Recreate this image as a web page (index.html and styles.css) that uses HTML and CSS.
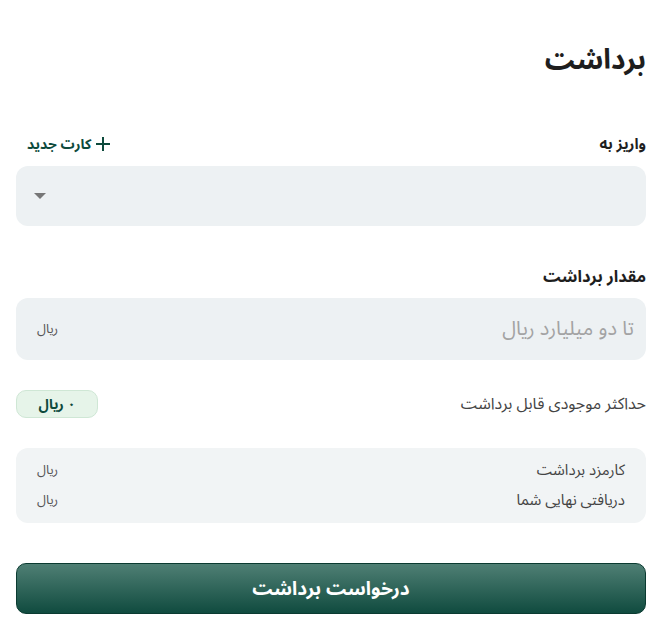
FILE: index.html
```html
<!DOCTYPE html>
<html lang="fa" dir="rtl">
<head>
<meta charset="UTF-8">
<meta name="viewport" content="width=device-width, initial-scale=1.0">
<title>برداشت</title>
<link rel="stylesheet" href="styles.css">
</head>
<body>

<div class="withdraw">
    <h1 class="title">برداشت</h1>

    <div class="field-head">
        <span class="label">واریز به</span>
        <a class="new-card" href="#">
            <svg width="16" height="16" viewBox="0 0 16 16"><path d="M8 1v14M1 8h14" stroke="#0d4a3c" stroke-width="2" fill="none"/></svg>
            کارت جدید
        </a>
    </div>
    <div class="select-box">
        <span class="caret"></span>
    </div>

    <div class="field-head amount-head">
        <span class="label">مقدار برداشت</span>
    </div>
    <div class="input-box">
        <span class="placeholder">تا دو میلیارد ریال</span>
        <span class="unit">ریال</span>
    </div>

    <div class="balance-row">
        <span class="balance-text">حداکثر موجودی قابل برداشت</span>
        <span class="badge">۰ ریال</span>
    </div>

    <div class="summary">
        <div class="summary-row">
            <span>کارمزد برداشت</span>
            <span class="unit">ریال</span>
        </div>
        <div class="summary-row">
            <span>دریافتی نهایی شما</span>
            <span class="unit">ریال</span>
        </div>
    </div>

    <button class="submit">درخواست برداشت</button>
</div>

</body>
</html>
```

FILE: styles.css
```css
body {
    margin: 0;
    font-family: "Noto Sans Arabic", "DejaVu Sans", sans-serif;
    background-color: #fff;
    color: #222;
}

.withdraw {
    padding: 0 13px 0 16px;
    display: flex;
    flex-direction: column;
}

.title {
    margin: 40px 0 0 0;
    font-size: 28px;
    font-weight: bold;
    color: #1e1e1e;
    line-height: 42px;
}

.field-head {
    display: flex;
    justify-content: space-between;
    align-items: center;
    margin-top: 50px;
    height: 24px;
}

.amount-head {
    margin-top: 38px;
}

.label {
    font-size: 15px;
    font-weight: bold;
    color: #1e1e1e;
}

.amount-head .label {
    font-size: 16.5px;
}

.new-card {
    display: flex;
    align-items: center;
    gap: 4px;
    font-size: 14px;
    font-weight: bold;
    color: #0d4a3c;
    text-decoration: none;
    margin-left: 11px;
}

.select-box {
    margin-top: 10px;
    height: 60px;
    background-color: #edf1f3;
    border-radius: 12px;
    display: flex;
    align-items: center;
    justify-content: flex-end;
    padding-left: 18px;
}

.caret {
    width: 0;
    height: 0;
    border-left: 6px solid transparent;
    border-right: 6px solid transparent;
    border-top: 6px solid #777;
}

.input-box {
    margin-top: 10px;
    height: 62px;
    background-color: #edf1f3;
    border-radius: 12px;
    display: flex;
    align-items: center;
    justify-content: space-between;
    padding: 0 12px 0 21px;
}

.placeholder {
    font-size: 20px;
    color: #a3a3a3;
}

.unit {
    font-size: 13px;
    color: #555;
}

.balance-row {
    margin-top: 30px;
    height: 28px;
    display: flex;
    justify-content: space-between;
    align-items: center;
}

.balance-text {
    font-size: 16px;
    color: #444;
}

.badge {
    width: 82px;
    height: 28px;
    box-sizing: border-box;
    display: flex;
    align-items: center;
    justify-content: center;
    background-color: #e6f4e9;
    border: 1px solid #cfe7d5;
    border-radius: 10px;
    font-size: 14px;
    font-weight: bold;
    color: #0d4a3c;
}

.summary {
    margin-top: 30px;
    background-color: #f1f4f5;
    border-radius: 12px;
    padding: 7px 21px 8px 21px;
    display: flex;
    flex-direction: column;
}

.summary-row {
    display: flex;
    justify-content: space-between;
    align-items: center;
    height: 30px;
    font-size: 15px;
    color: #444;
}

.summary-row .unit {
    font-size: 13px;
}

.submit {
    margin-top: 40px;
    height: 51px;
    border: 1px solid #0b3b31;
    border-radius: 10px;
    background: linear-gradient(to bottom, #4f7f74, #104b3f);
    color: #fff;
    font-family: inherit;
    font-size: 19px;
    font-weight: bold;
    cursor: pointer;
}
```
